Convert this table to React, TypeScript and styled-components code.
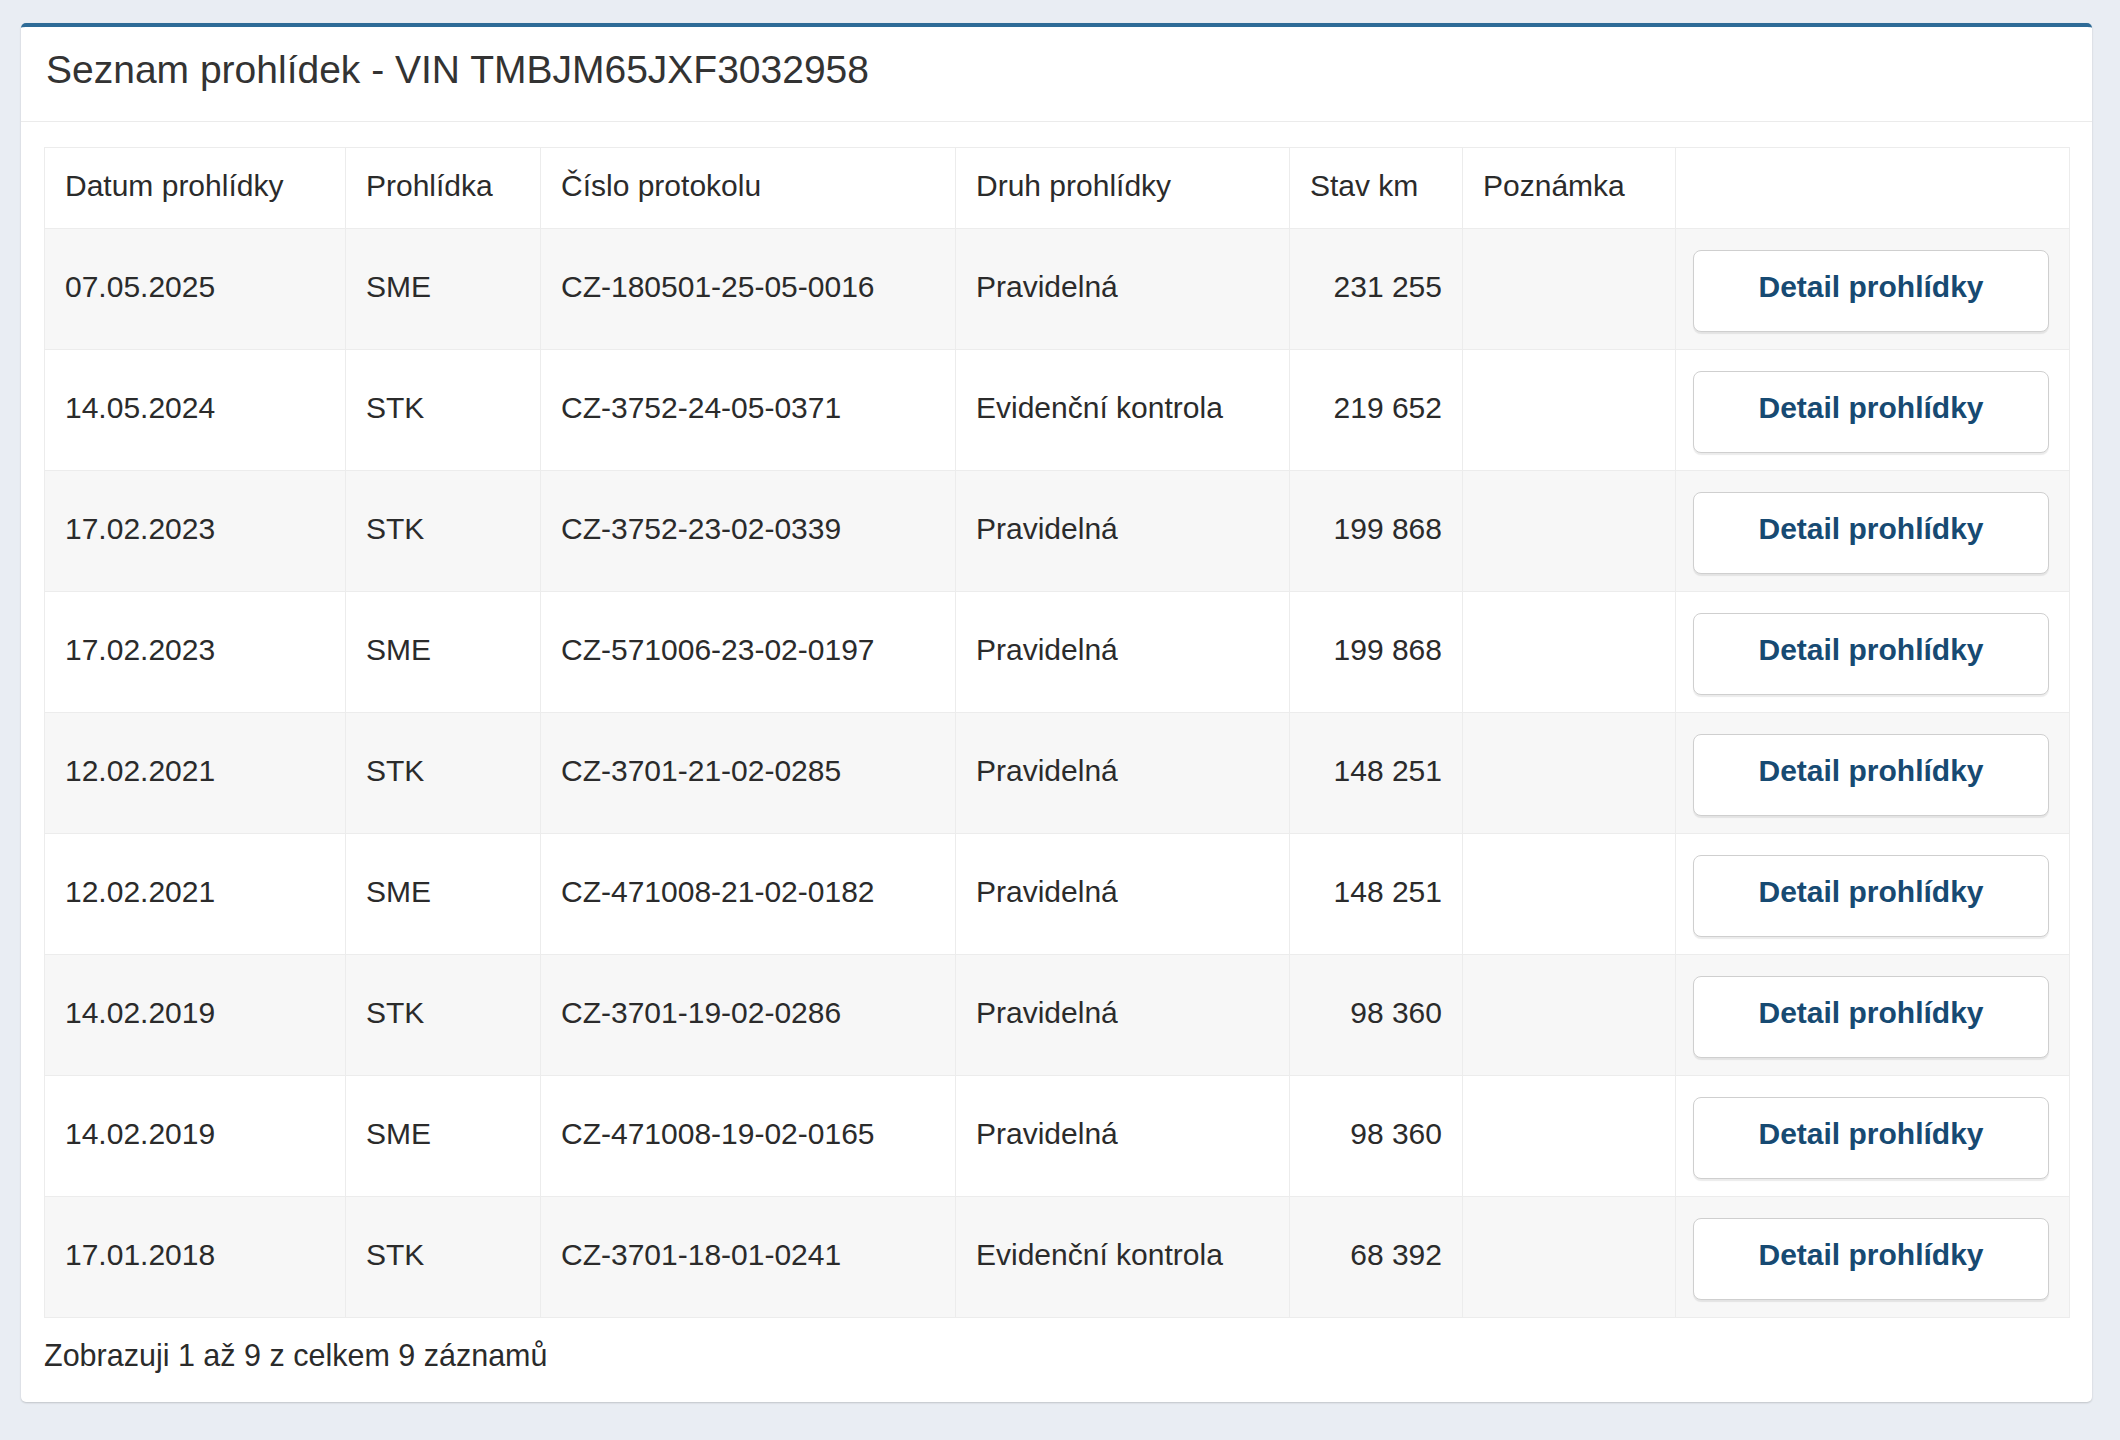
import React from "react";
import styled, { createGlobalStyle } from "styled-components";

const GlobalStyle = createGlobalStyle`
  html, body {
    margin: 0;
    padding: 0;
    background: #e9edf3;
  }
  body {
    font-family: "Liberation Sans", Arial, Helvetica, sans-serif;
    color: #2b2b2b;
  }
`;

const Page = styled.div`
  padding: 23px 28px 38px 21px;
  min-height: 1440px;
  box-sizing: border-box;
`;

const Panel = styled.section`
  width: 2071px;
  background: #ffffff;
  border-top: 4px solid #2e6b97;
  border-radius: 5px;
  box-shadow: 0 1px 2px rgba(0, 0, 0, 0.18);
  box-sizing: border-box;
`;

const PanelHeader = styled.header`
  padding: 21px 25px 29px;
  border-bottom: 1px solid #ebebeb;
`;

const Title = styled.h2`
  margin: 0;
  font-size: 39px;
  line-height: 44px;
  font-weight: 400;
  color: #333333;
`;

const PanelBody = styled.div`
  padding: 25px 23px 29px;
`;

const Table = styled.table`
  width: 2025px;
  table-layout: fixed;
  border-collapse: collapse;
  font-size: 30px;
  color: #2b2b2b;
`;

const HeadCell = styled.th`
  height: 75px;
  padding: 0 20px 5px;
  text-align: left;
  font-weight: 400;
  vertical-align: middle;
  border: 1px solid #ececec;
  white-space: nowrap;
`;

const Row = styled.tr<{ $striped: boolean }>`
  background: ${(p) => (p.$striped ? "#f7f7f7" : "#ffffff")};
`;

const Cell = styled.td<{ $right?: boolean; $action?: boolean }>`
  height: ${(p) => (p.$action ? "120px" : "115px")};
  padding: ${(p) => (p.$action ? "0 20px 0 17px" : "0 20px 5px")};
  text-align: ${(p) => (p.$right ? "right" : "left")};
  vertical-align: middle;
  border: 1px solid #ececec;
  white-space: nowrap;
`;

const DetailButton = styled.button`
  display: block;
  width: 100%;
  height: 82px;
  margin-top: 3px;
  padding: 0 0 8px;
  background: #ffffff;
  border: 1px solid #cfcfcf;
  border-radius: 8px;
  box-shadow: 0 2px 1px rgba(0, 0, 0, 0.08);
  font-family: "Liberation Sans", Arial, Helvetica, sans-serif;
  font-size: 30px;
  font-weight: 700;
  color: #174a72;
  cursor: pointer;
`;

const Footer = styled.p`
  margin: 20px 0 0;
  font-size: 30.5px;
  line-height: 35px;
  color: #2b2b2b;
`;

type Inspection = {
  date: string;
  type: string;
  protocol: string;
  kind: string;
  km: string;
};

const rows: Inspection[] = [
  { date: "07.05.2025", type: "SME", protocol: "CZ-180501-25-05-0016", kind: "Pravidelná", km: "231 255" },
  { date: "14.05.2024", type: "STK", protocol: "CZ-3752-24-05-0371", kind: "Evidenční kontrola", km: "219 652" },
  { date: "17.02.2023", type: "STK", protocol: "CZ-3752-23-02-0339", kind: "Pravidelná", km: "199 868" },
  { date: "17.02.2023", type: "SME", protocol: "CZ-571006-23-02-0197", kind: "Pravidelná", km: "199 868" },
  { date: "12.02.2021", type: "STK", protocol: "CZ-3701-21-02-0285", kind: "Pravidelná", km: "148 251" },
  { date: "12.02.2021", type: "SME", protocol: "CZ-471008-21-02-0182", kind: "Pravidelná", km: "148 251" },
  { date: "14.02.2019", type: "STK", protocol: "CZ-3701-19-02-0286", kind: "Pravidelná", km: "98 360" },
  { date: "14.02.2019", type: "SME", protocol: "CZ-471008-19-02-0165", kind: "Pravidelná", km: "98 360" },
  { date: "17.01.2018", type: "STK", protocol: "CZ-3701-18-01-0241", kind: "Evidenční kontrola", km: "68 392" },
];

const colWidths = [301, 195, 415, 334, 173, 213, 394];

export default function App() {
  return (
    <>
      <GlobalStyle />
      <Page>
        <Panel>
          <PanelHeader>
            <Title>Seznam prohlídek - VIN TMBJM65JXF3032958</Title>
          </PanelHeader>
          <PanelBody>
            <Table>
              <colgroup>
                {colWidths.map((w, i) => (
                  <col key={i} style={{ width: w }} />
                ))}
              </colgroup>
              <thead>
                <tr>
                  <HeadCell>Datum prohlídky</HeadCell>
                  <HeadCell>Prohlídka</HeadCell>
                  <HeadCell>Číslo protokolu</HeadCell>
                  <HeadCell>Druh prohlídky</HeadCell>
                  <HeadCell>Stav km</HeadCell>
                  <HeadCell>Poznámka</HeadCell>
                  <HeadCell></HeadCell>
                </tr>
              </thead>
              <tbody>
                {rows.map((r, i) => (
                  <Row key={i} $striped={i % 2 === 0}>
                    <Cell>{r.date}</Cell>
                    <Cell>{r.type}</Cell>
                    <Cell>{r.protocol}</Cell>
                    <Cell>{r.kind}</Cell>
                    <Cell $right>{r.km}</Cell>
                    <Cell></Cell>
                    <Cell $action>
                      <DetailButton type="button">Detail prohlídky</DetailButton>
                    </Cell>
                  </Row>
                ))}
              </tbody>
            </Table>
            <Footer>Zobrazuji 1 až 9 z celkem 9 záznamů</Footer>
          </PanelBody>
        </Panel>
      </Page>
    </>
  );
}
